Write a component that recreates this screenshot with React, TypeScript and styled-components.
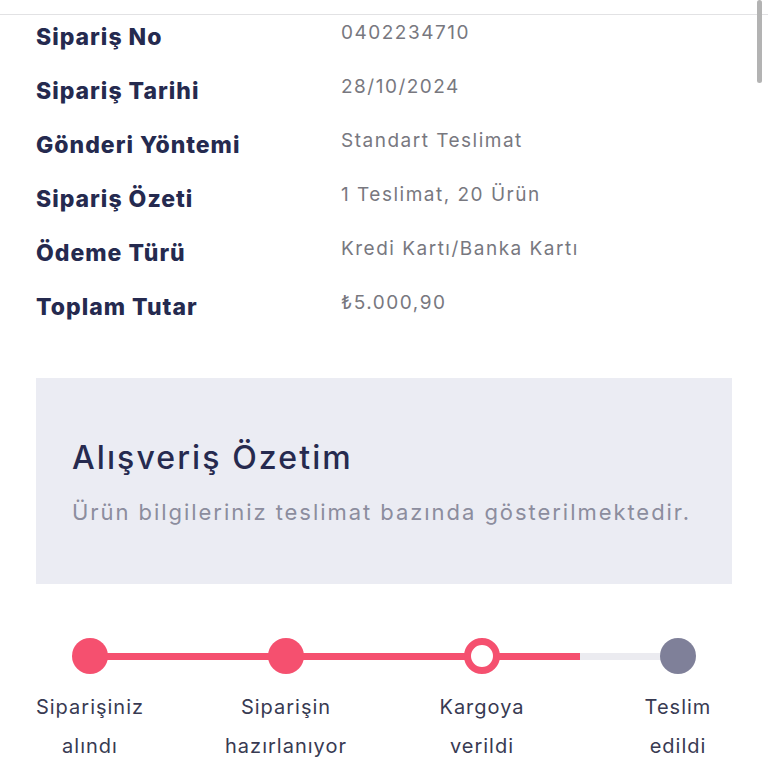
import styled, { createGlobalStyle } from "styled-components";

const GlobalStyle = createGlobalStyle`
  html, body {
    margin: 0;
    overflow: hidden;
    background: #ffffff;
    font-family: "Inter", "Noto Sans", sans-serif;
  }
`;

const details = [
  { label: "Sipariş No", value: "0402234710" },
  { label: "Sipariş Tarihi", value: "28/10/2024" },
  { label: "Gönderi Yöntemi", value: "Standart Teslimat" },
  { label: "Sipariş Özeti", value: "1 Teslimat, 20 Ürün" },
  { label: "Ödeme Türü", value: "Kredi Kartı/Banka Kartı" },
  { label: "Toplam Tutar", value: "₺5.000,90" },
];

const steps = [
  { title: "Siparişiniz", sub: "alındı", state: "done" },
  { title: "Siparişin", sub: "hazırlanıyor", state: "done" },
  { title: "Kargoya", sub: "verildi", state: "current" },
  { title: "Teslim", sub: "edildi", state: "todo" },
] as const;

type StepState = (typeof steps)[number]["state"];

const App = () => {
  return (
    <>
      <GlobalStyle />
      <PageStyled>
        <TopBarStyled />
        <DetailListStyled>
          {details.map((d) => (
            <DetailRowStyled key={d.label}>
              <LabelStyled>{d.label}</LabelStyled>
              <ValueStyled>{d.value}</ValueStyled>
            </DetailRowStyled>
          ))}
        </DetailListStyled>
        <SummaryBoxStyled>
          <SummaryTitleStyled>Alışveriş Özetim</SummaryTitleStyled>
          <SummaryTextStyled>
            Ürün bilgileriniz teslimat bazında gösterilmektedir.
          </SummaryTextStyled>
        </SummaryBoxStyled>
        <StepperStyled>
          <TrackStyled>
            {steps.map((s, i) => (
              <TrackPartStyled key={s.title} $last={i === steps.length - 1}>
                <DotStyled $state={s.state} />
                {i < steps.length - 1 && (
                  <ConnectorStyled
                    $fill={s.state === "done" ? 100 : s.state === "current" ? 50 : 0}
                  />
                )}
              </TrackPartStyled>
            ))}
          </TrackStyled>
          <StepLabelsStyled>
            {steps.map((s) => (
              <StepLabelStyled key={s.title}>
                <span>{s.title}</span>
                <span>{s.sub}</span>
              </StepLabelStyled>
            ))}
          </StepLabelsStyled>
        </StepperStyled>
        <ScrollThumbStyled />
      </PageStyled>
    </>
  );
};

const PageStyled = styled.div`
  position: relative;
  width: 768px;
  height: 768px;
  overflow: hidden;
`;

const TopBarStyled = styled.div`
  height: 14px;
  border-bottom: 1px solid #e2e2e4;
`;

const DetailListStyled = styled.div`
  display: flex;
  flex-direction: column;
  padding: 0 36px;
`;

const DetailRowStyled = styled.div`
  display: grid;
  grid-template-columns: 305px 1fr;
  align-items: start;
  height: 54px;
`;

const LabelStyled = styled.div`
  font-size: 23px;
  line-height: 44px;
  font-weight: 800;
  letter-spacing: 1px;
  color: #252a4f;
`;

const ValueStyled = styled.div`
  font-size: 19px;
  line-height: 36px;
  letter-spacing: 1.5px;
  color: #78787f;
`;

const SummaryBoxStyled = styled.div`
  margin: 39px 36px 0;
  padding: 60px 36px 56px;
  background: #ebecf3;
`;

const SummaryTitleStyled = styled.h2`
  margin: 0;
  font-size: 32px;
  line-height: 40px;
  font-weight: 500;
  letter-spacing: 2.1px;
  color: #262a4f;
`;

const SummaryTextStyled = styled.p`
  margin: 18px 0 0;
  font-size: 22px;
  line-height: 32px;
  letter-spacing: 1.95px;
  color: #8c8d9e;
`;

const StepperStyled = styled.div`
  margin-top: 54px;
  padding: 0 36px;
`;

const TrackStyled = styled.div`
  display: flex;
  align-items: center;
  padding: 0 36px;
`;

const TrackPartStyled = styled.div<{ $last: boolean }>`
  display: flex;
  align-items: center;
  flex: ${(p) => (p.$last ? "0 0 auto" : "1")};
`;

const dotColor: Record<StepState, string> = {
  done: "#f5506f",
  current: "#ffffff",
  todo: "#7f8099",
};

const DotStyled = styled.div<{ $state: StepState }>`
  flex: none;
  box-sizing: border-box;
  width: 36px;
  height: 36px;
  border-radius: 50%;
  background: ${(p) => dotColor[p.$state]};
  border: ${(p) => (p.$state === "current" ? "7px solid #f5506f" : "none")};
`;

const ConnectorStyled = styled.div<{ $fill: number }>`
  flex: 1;
  height: 7px;
  margin: 0 -1px;
  background: linear-gradient(
    to right,
    #f5506f ${(p) => p.$fill}%,
    #ebebf0 ${(p) => p.$fill}%
  );
`;

const StepLabelsStyled = styled.div`
  display: flex;
  justify-content: space-between;
  margin-top: 14px;
`;

const StepLabelStyled = styled.div`
  display: flex;
  flex-direction: column;
  align-items: center;
  width: 108px;
  font-size: 20px;
  line-height: 39px;
  letter-spacing: 1px;
  color: #383a52;
  white-space: nowrap;
`;

const ScrollThumbStyled = styled.div`
  position: absolute;
  top: 0;
  right: 6px;
  width: 5px;
  height: 83px;
  border-radius: 3px;
  background: #b3b3b3;
`;

export default App;
